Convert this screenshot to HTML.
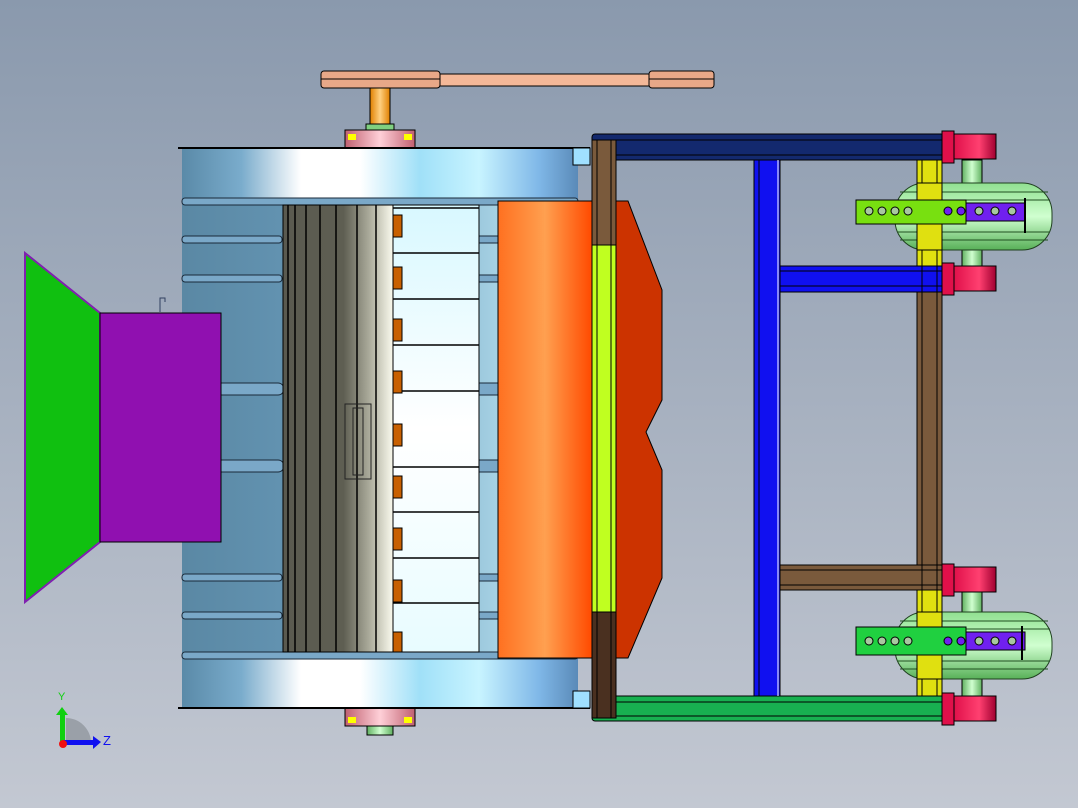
<!DOCTYPE html>
<html><head><style>html,body{margin:0;padding:0;width:1078px;height:808px;overflow:hidden}</style></head><body>
<svg width="1078" height="808" viewBox="0 0 1078 808" xmlns="http://www.w3.org/2000/svg" font-family="Liberation Sans, sans-serif">
<defs>
<linearGradient id="bg" x1="0" y1="0" x2="0" y2="1"><stop offset="0" stop-color="#8a99ad"/><stop offset="1" stop-color="#c3c8d2"/></linearGradient>
<linearGradient id="drum" x1="0" y1="0" x2="1" y2="0"><stop offset="0" stop-color="#5a8aa8"/><stop offset="0.15" stop-color="#7aaccc"/><stop offset="0.3" stop-color="#ffffff"/><stop offset="0.45" stop-color="#ffffff"/><stop offset="0.6" stop-color="#a0e0f8"/><stop offset="0.75" stop-color="#c8f4ff"/><stop offset="0.9" stop-color="#80b8e8"/><stop offset="1" stop-color="#5a8ab8"/></linearGradient>
<linearGradient id="body" x1="0" y1="0" x2="1" y2="0"><stop offset="0" stop-color="#5a88a4"/><stop offset="0.5" stop-color="#6a9cbc"/><stop offset="1" stop-color="#d0f6ff"/></linearGradient>
<linearGradient id="org" x1="0" y1="0" x2="1" y2="0"><stop offset="0" stop-color="#ff7020"/><stop offset="0.5" stop-color="#ffa050"/><stop offset="1" stop-color="#ff4a00"/></linearGradient>
<linearGradient id="strip" x1="0" y1="0" x2="1" y2="0"><stop offset="0" stop-color="#5a5a50"/><stop offset="0.55" stop-color="#5e5e52"/><stop offset="0.8" stop-color="#b0b0a0"/><stop offset="1" stop-color="#fafaee"/></linearGradient>
<linearGradient id="panel" x1="0" y1="0" x2="0" y2="1"><stop offset="0" stop-color="#d8f8ff"/><stop offset="0.5" stop-color="#ffffff"/><stop offset="1" stop-color="#e8fcff"/></linearGradient>
<linearGradient id="red" x1="0" y1="0" x2="1" y2="0"><stop offset="0" stop-color="#e0104a"/><stop offset="0.6" stop-color="#ff4070"/><stop offset="1" stop-color="#a00030"/></linearGradient>
<linearGradient id="wheel" x1="0" y1="0" x2="0" y2="1"><stop offset="0" stop-color="#90e090"/><stop offset="0.5" stop-color="#d0ffd0"/><stop offset="1" stop-color="#58b058"/></linearGradient>
<linearGradient id="pink" x1="0" y1="0" x2="1" y2="0"><stop offset="0" stop-color="#c06070"/><stop offset="0.5" stop-color="#ffd0d8"/><stop offset="1" stop-color="#c06070"/></linearGradient>
<linearGradient id="sh" x1="0" y1="0" x2="1" y2="0"><stop offset="0" stop-color="#e08000"/><stop offset="0.5" stop-color="#ffd080"/><stop offset="1" stop-color="#e08000"/></linearGradient>
<linearGradient id="gs" x1="0" y1="0" x2="1" y2="0"><stop offset="0" stop-color="#60b060"/><stop offset="0.5" stop-color="#d0ffd0"/><stop offset="1" stop-color="#60b060"/></linearGradient>
</defs>
<rect width="1078" height="808" fill="url(#bg)"/>
<!-- belt/pulleys -->
<rect x="380" y="74" width="300" height="12" fill="#f4b898" stroke="#000" stroke-width="1"/>
<rect x="321" y="71" width="119" height="17" rx="3" fill="#e8a888" stroke="#000"/>
<rect x="649" y="71" width="65" height="17" rx="3" fill="#e8a888" stroke="#000"/>
<line x1="321" y1="79" x2="440" y2="79" stroke="#000"/><line x1="649" y1="79" x2="714" y2="79" stroke="#000"/>
<rect x="370" y="88" width="20" height="40" fill="url(#sh)" stroke="#000"/>
<rect x="366" y="124" width="28" height="8" fill="#80d080" stroke="#000"/>
<rect x="345" y="130" width="70" height="18" fill="url(#pink)" stroke="#000"/>
<rect x="348" y="134" width="8" height="6" fill="#ff0"/><rect x="404" y="134" width="8" height="6" fill="#ff0"/>
<rect x="345" y="708" width="70" height="18" fill="url(#pink)" stroke="#000"/>
<rect x="348" y="717" width="8" height="6" fill="#ff0"/><rect x="404" y="717" width="8" height="6" fill="#ff0"/>
<rect x="367" y="726" width="26" height="9" fill="url(#gs)" stroke="#000"/>
<!-- drum -->
<rect x="182" y="148" width="396" height="560" fill="url(#body)"/>
<rect x="182" y="148" width="396" height="52" fill="url(#drum)"/>
<rect x="182" y="658" width="396" height="50" fill="url(#drum)"/>
<line x1="178" y1="148" x2="590" y2="148" stroke="#000" stroke-width="2"/>
<line x1="178" y1="708" x2="590" y2="708" stroke="#000" stroke-width="2"/>
<g fill="#7aa8c8" stroke="#1a2a3a">
<rect x="182" y="198" width="396" height="7" rx="3"/>
<rect x="182" y="236" width="100" height="7" rx="3"/><rect x="478" y="236" width="22" height="7"/>
<rect x="182" y="275" width="100" height="7" rx="3"/><rect x="478" y="275" width="22" height="7"/>
<rect x="214" y="383" width="70" height="12" rx="6"/><rect x="478" y="383" width="22" height="12"/>
<rect x="214" y="460" width="70" height="12" rx="6"/><rect x="478" y="460" width="22" height="12"/>
<rect x="182" y="574" width="100" height="7" rx="3"/><rect x="478" y="574" width="22" height="7"/>
<rect x="182" y="612" width="100" height="7" rx="3"/><rect x="478" y="612" width="22" height="7"/>
<rect x="182" y="652" width="396" height="7" rx="3"/>
</g>
<rect x="283" y="205" width="110" height="447" fill="url(#strip)" stroke="#000"/>
<g stroke="#000" stroke-width="1.5"><line x1="288" y1="205" x2="288" y2="652"/><line x1="295" y1="205" x2="295" y2="652"/><line x1="306" y1="205" x2="306" y2="652"/><line x1="320" y1="205" x2="320" y2="652"/><line x1="336" y1="205" x2="336" y2="652"/><line x1="357" y1="205" x2="357" y2="652"/><line x1="376" y1="205" x2="376" y2="652"/></g>
<rect x="345" y="404" width="26" height="75" fill="none" stroke="#222"/><rect x="353" y="408" width="10" height="67" fill="none" stroke="#222"/>
<rect x="393" y="205" width="86" height="447" fill="url(#panel)" stroke="#000"/>
<g stroke="#000" stroke-width="1.5"><line x1="393" y1="208" x2="479" y2="208"/><line x1="393" y1="253" x2="479" y2="253"/><line x1="393" y1="299" x2="479" y2="299"/><line x1="393" y1="345" x2="479" y2="345"/><line x1="393" y1="391" x2="479" y2="391"/><line x1="393" y1="467" x2="479" y2="467"/><line x1="393" y1="512" x2="479" y2="512"/><line x1="393" y1="558" x2="479" y2="558"/><line x1="393" y1="603" x2="479" y2="603"/></g>
<g fill="#c86000" stroke="#000"><rect x="393" y="215" width="9" height="22"/><rect x="393" y="267" width="9" height="22"/><rect x="393" y="319" width="9" height="22"/><rect x="393" y="371" width="9" height="22"/><rect x="393" y="424" width="9" height="22"/><rect x="393" y="476" width="9" height="22"/><rect x="393" y="528" width="9" height="22"/><rect x="393" y="580" width="9" height="22"/><rect x="393" y="632" width="9" height="20"/></g>
<rect x="498" y="201" width="94" height="457" fill="url(#org)" stroke="#000"/>
<polygon points="592,201 628,201 662,290 662,400 646,432 662,470 662,578 628,658 592,658" fill="#cc3300" stroke="#000"/>
<rect x="573" y="148" width="17" height="17" fill="#a0e0ff" stroke="#000"/>
<rect x="573" y="691" width="17" height="17" fill="#a0e0ff" stroke="#000"/>
<!-- hopper -->
<polygon points="25,253 100,313 100,542 25,602" fill="#10c010" stroke="#8020b0" stroke-width="2"/>
<rect x="100" y="313" width="121" height="229" fill="#9010b0" stroke="#000"/>
<path d="M160 312 V298 h5 v4" fill="none" stroke="#304060"/>
<!-- frame -->
<rect x="592" y="134" width="352" height="26" rx="3" fill="#13296e" stroke="#000"/>
<line x1="600" y1="140" x2="944" y2="140" stroke="#000"/><line x1="600" y1="155" x2="944" y2="155" stroke="#000"/>
<rect x="592" y="696" width="352" height="25" rx="3" fill="#18b050" stroke="#000"/>
<line x1="600" y1="702" x2="944" y2="702" stroke="#000"/><line x1="600" y1="716" x2="944" y2="716" stroke="#000"/>
<rect x="592" y="140" width="24" height="105" fill="#7a5a3c" stroke="#000"/>
<rect x="592" y="245" width="24" height="367" fill="#c0ff20" stroke="#000"/>
<rect x="592" y="612" width="24" height="106" fill="#4a3020" stroke="#000"/>
<line x1="597" y1="140" x2="597" y2="718" stroke="#000"/><line x1="611" y1="140" x2="611" y2="718" stroke="#000"/>
<rect x="754" y="160" width="26" height="536" fill="#1010f0" stroke="#000"/>
<line x1="759" y1="160" x2="759" y2="696" stroke="#000"/><line x1="778" y1="160" x2="778" y2="696" stroke="#fff"/>
<rect x="780" y="266" width="164" height="26" fill="#1010f0" stroke="#000"/>
<line x1="780" y1="271" x2="944" y2="271" stroke="#000"/><line x1="780" y1="286" x2="944" y2="286" stroke="#000"/>
<rect x="780" y="565" width="164" height="25" fill="#7a5a3c" stroke="#000"/>
<line x1="780" y1="570" x2="944" y2="570" stroke="#000"/><line x1="780" y1="585" x2="944" y2="585" stroke="#000"/>
<rect x="917" y="292" width="25" height="273" fill="#7a5a3c" stroke="#000"/>
<rect x="917" y="160" width="25" height="106" fill="#e0e010" stroke="#000"/>
<rect x="917" y="590" width="25" height="106" fill="#e0e010" stroke="#000"/>
<line x1="922" y1="160" x2="922" y2="696" stroke="#000"/><line x1="937" y1="160" x2="937" y2="696" stroke="#000"/>
<!-- wheels -->
<g>
<rect x="962" y="160" width="20" height="106" fill="url(#gs)" stroke="#000"/>
<rect x="962" y="590" width="20" height="106" fill="url(#gs)" stroke="#000"/>
<rect x="895" y="183" width="157" height="67" rx="30" fill="url(#wheel)" stroke="#204020"/>
<rect x="895" y="612" width="157" height="67" rx="30" fill="url(#wheel)" stroke="#204020"/>
<g stroke="#205020" stroke-width="1"><line x1="900" y1="192" x2="1048" y2="192"/><line x1="897" y1="200" x2="1050" y2="200"/><line x1="897" y1="232" x2="1050" y2="232"/><line x1="900" y1="240" x2="1048" y2="240"/><line x1="900" y1="621" x2="1048" y2="621"/><line x1="897" y1="629" x2="1050" y2="629"/><line x1="897" y1="661" x2="1050" y2="661"/><line x1="900" y1="669" x2="1048" y2="669"/></g>
<rect x="917" y="183" width="25" height="67" fill="#e0e010" stroke="#000"/>
<rect x="917" y="612" width="25" height="67" fill="#e0e010" stroke="#000"/>
<rect x="965" y="203" width="60" height="18" fill="#7020f0" stroke="#000"/>
<rect x="965" y="632" width="60" height="18" fill="#7020f0" stroke="#000"/>
<rect x="856" y="200" width="110" height="24" fill="#78e010" stroke="#000"/>
<rect x="856" y="627" width="110" height="28" fill="#20d040" stroke="#000"/>
<g fill="#a8c8a0" stroke="#000"><circle cx="869" cy="211" r="4"/><circle cx="882" cy="211" r="4"/><circle cx="895" cy="211" r="4"/><circle cx="908" cy="211" r="4"/><circle cx="979" cy="211" r="4"/><circle cx="995" cy="211" r="4"/><circle cx="1012" cy="211" r="4"/>
<circle cx="869" cy="641" r="4"/><circle cx="882" cy="641" r="4"/><circle cx="895" cy="641" r="4"/><circle cx="908" cy="641" r="4"/><circle cx="979" cy="641" r="4"/><circle cx="995" cy="641" r="4"/><circle cx="1012" cy="641" r="4"/></g>
<circle cx="948" cy="211" r="4" fill="#7020f0" stroke="#000"/><circle cx="961" cy="211" r="4" fill="#7020f0" stroke="#000"/>
<circle cx="948" cy="641" r="4" fill="#7020f0" stroke="#000"/><circle cx="961" cy="641" r="4" fill="#7020f0" stroke="#000"/>
<line x1="1025" y1="198" x2="1025" y2="233" stroke="#000" stroke-width="2"/>
<line x1="1022" y1="626" x2="1022" y2="660" stroke="#000" stroke-width="2"/>
</g>
<!-- clamps -->
<g stroke="#000">
<rect x="942" y="131" width="12" height="32" fill="#e0104a"/><path d="M954 134 h42 v25 h-42z" fill="url(#red)"/>
<rect x="942" y="263" width="12" height="32" fill="#e0104a"/><path d="M954 266 h42 v25 h-42z" fill="url(#red)"/>
<rect x="942" y="564" width="12" height="32" fill="#e0104a"/><path d="M954 567 h42 v25 h-42z" fill="url(#red)"/>
<rect x="942" y="693" width="12" height="32" fill="#e0104a"/><path d="M954 696 h42 v25 h-42z" fill="url(#red)"/>
</g>
<!-- axis -->
<path d="M66 718 A25 25 0 0 1 91 743 H66z" fill="#9aa0a8"/>
<rect x="60" y="713" width="5" height="30" fill="#10d010"/><polygon points="56,715 62,707 68,715" fill="#10d010"/>
<rect x="63" y="740" width="32" height="5" fill="#1010f0"/><polygon points="93,736 101,742 93,749" fill="#1010f0"/>
<circle cx="63" cy="744" r="4" fill="#f01010"/>
<text x="58" y="700" font-size="11" fill="#10d010">Y</text>
<text x="103" y="745" font-size="13" fill="#1010f0">Z</text>
</svg>
</body></html>
